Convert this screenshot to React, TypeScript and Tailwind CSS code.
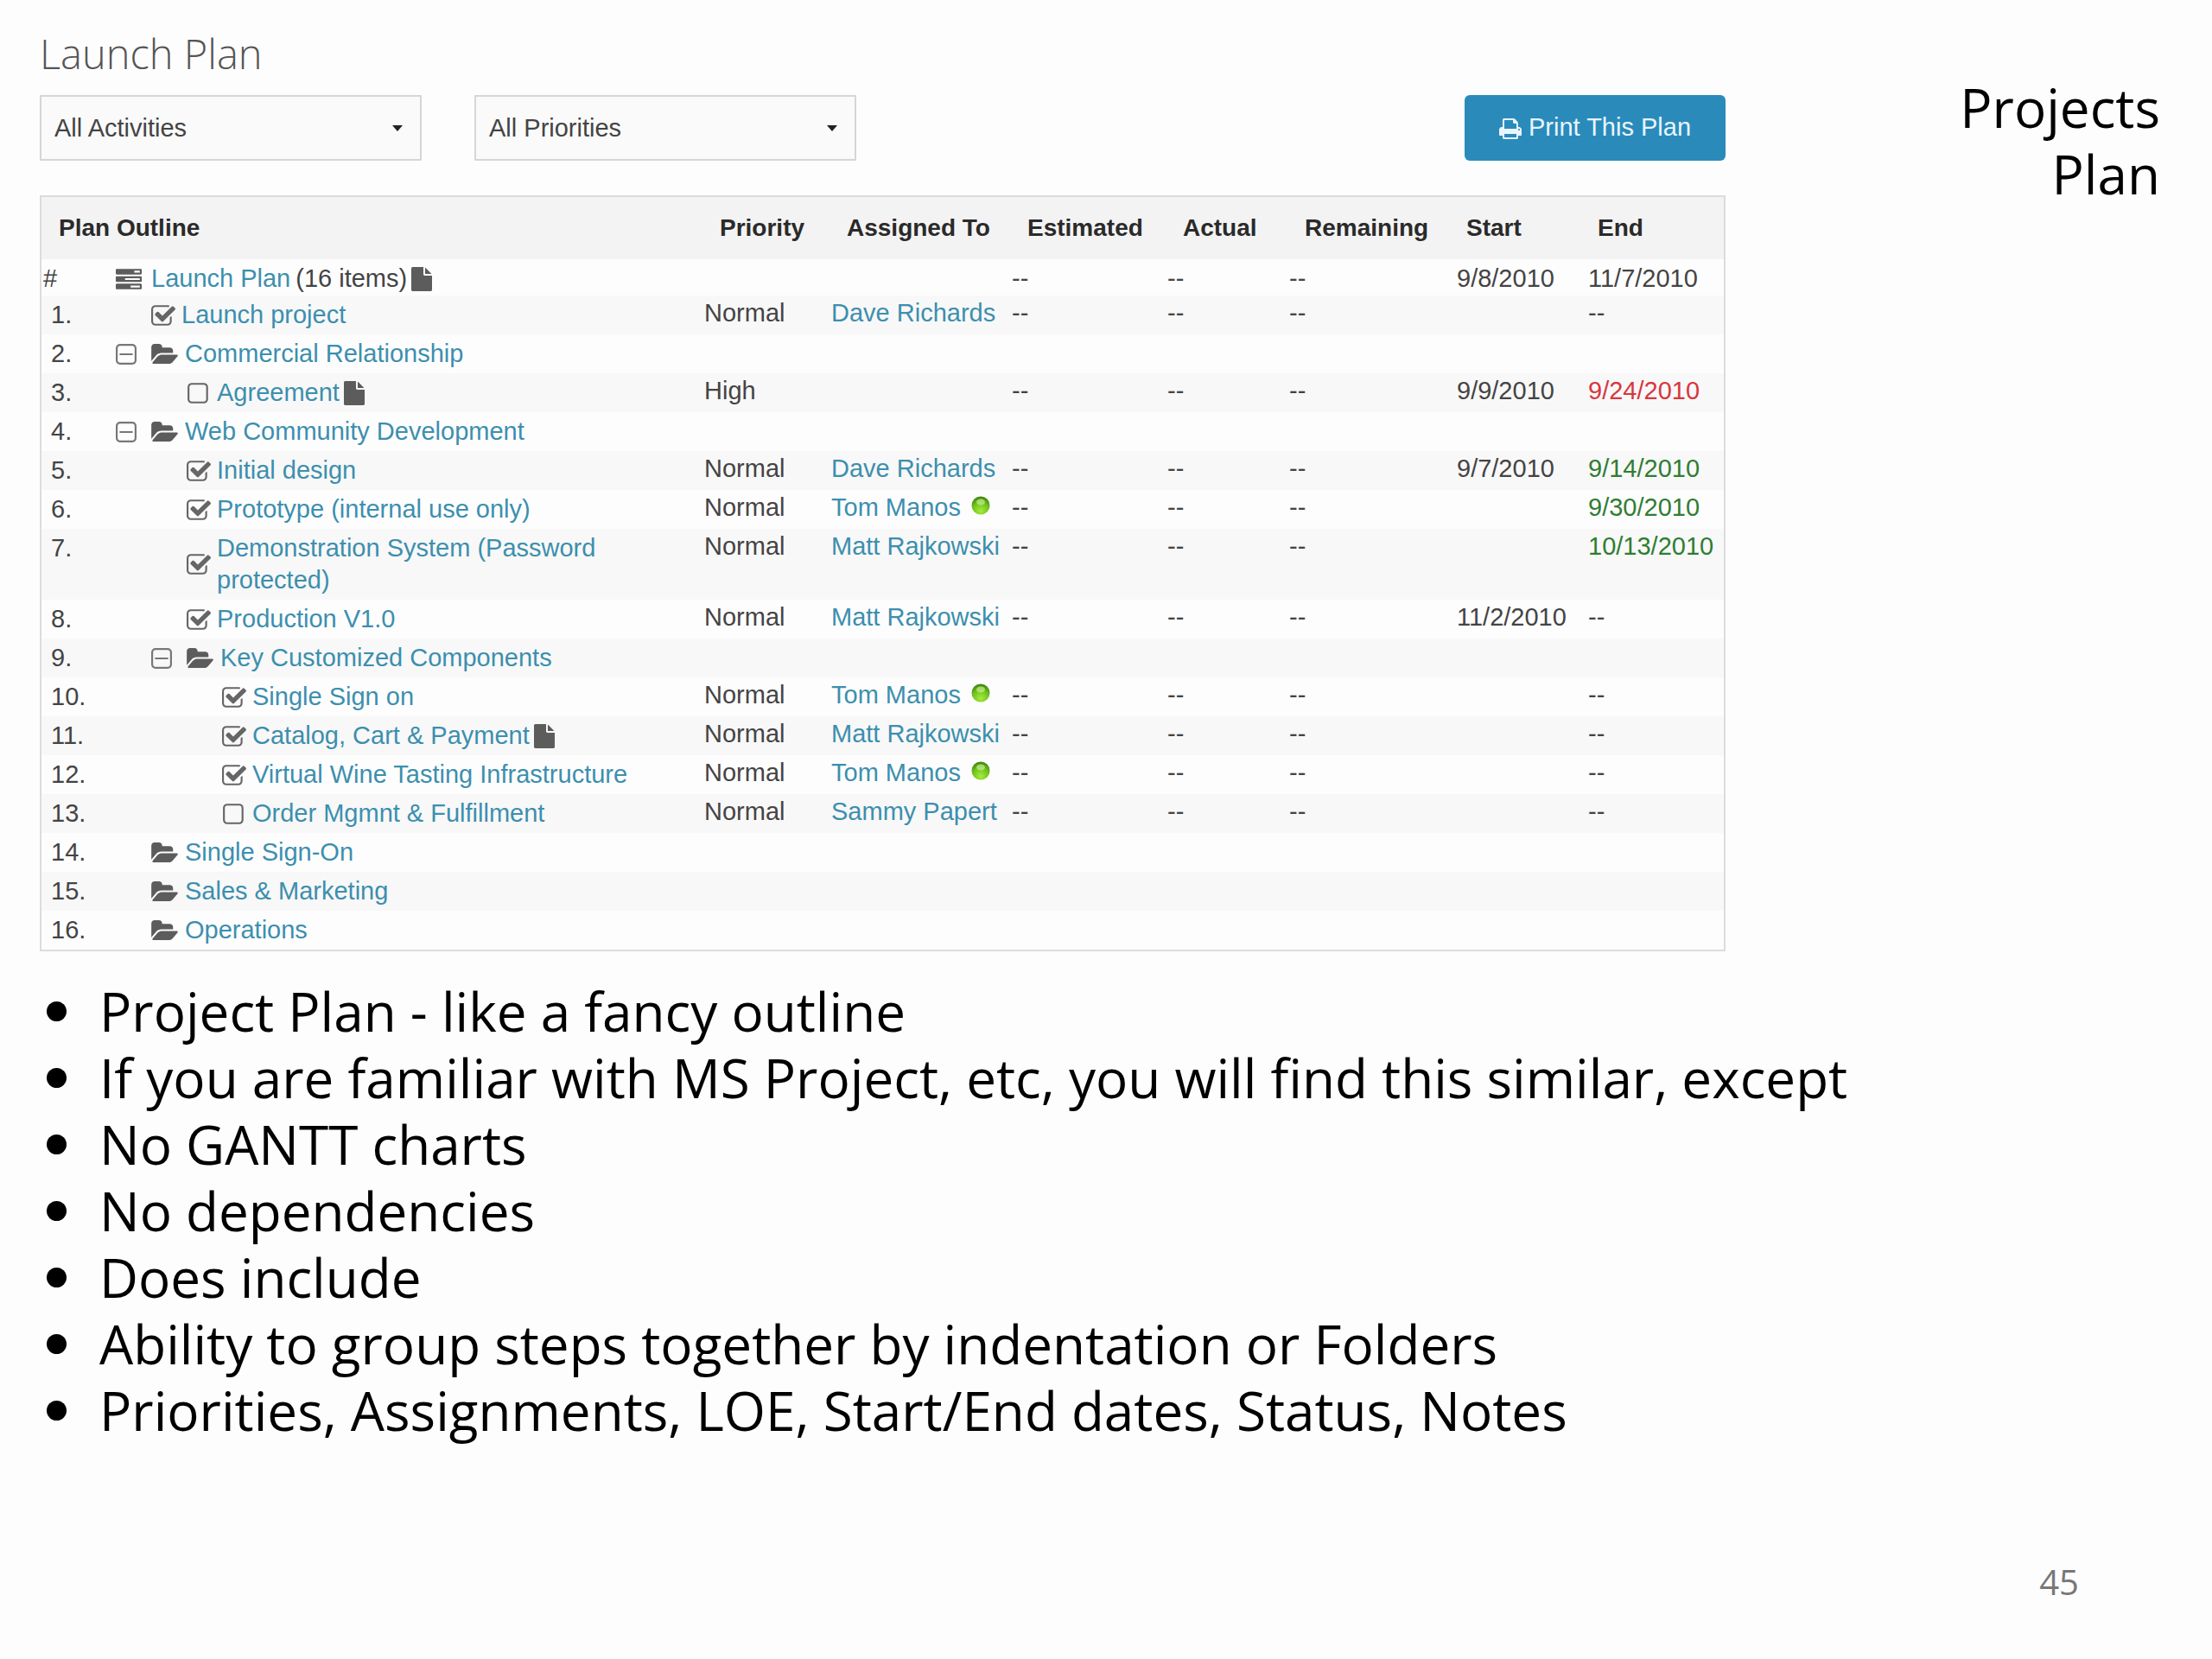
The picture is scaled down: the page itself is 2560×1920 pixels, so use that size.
import { useState } from 'react'

type Kind = 'plan' | 'task' | 'folder'

interface Row {
  num: string
  kind: Kind
  title: string
  level: number
  open?: boolean
  done?: boolean
  note?: boolean
  priority?: string
  person?: string
  online?: boolean
  start?: string
  end?: string
  endColor?: string
}

const rows: Row[] = [
  { num: '#', kind: 'plan', title: 'Launch Plan', level: 0, note: true, start: '9/8/2010', end: '11/7/2010' },
  { num: '1.', kind: 'task', title: 'Launch project', level: 1, done: true, priority: 'Normal', person: 'Dave Richards', end: '--' },
  { num: '2.', kind: 'folder', title: 'Commercial Relationship', level: 0, open: true },
  { num: '3.', kind: 'task', title: 'Agreement', level: 2, note: true, priority: 'High', start: '9/9/2010', end: '9/24/2010', endColor: 'text-[#d9363e]' },
  { num: '4.', kind: 'folder', title: 'Web Community Development', level: 0, open: true },
  { num: '5.', kind: 'task', title: 'Initial design', level: 2, done: true, priority: 'Normal', person: 'Dave Richards', start: '9/7/2010', end: '9/14/2010', endColor: 'text-[#2f7d32]' },
  { num: '6.', kind: 'task', title: 'Prototype (internal use only)', level: 2, done: true, priority: 'Normal', person: 'Tom Manos', online: true, end: '9/30/2010', endColor: 'text-[#2f7d32]' },
  { num: '7.', kind: 'task', title: 'Demonstration System (Password protected)', level: 2, done: true, priority: 'Normal', person: 'Matt Rajkowski', end: '10/13/2010', endColor: 'text-[#2f7d32]' },
  { num: '8.', kind: 'task', title: 'Production V1.0', level: 2, done: true, priority: 'Normal', person: 'Matt Rajkowski', start: '11/2/2010', end: '--' },
  { num: '9.', kind: 'folder', title: 'Key Customized Components', level: 1, open: true },
  { num: '10.', kind: 'task', title: 'Single Sign on', level: 3, done: true, priority: 'Normal', person: 'Tom Manos', online: true, end: '--' },
  { num: '11.', kind: 'task', title: 'Catalog, Cart & Payment', level: 3, done: true, note: true, priority: 'Normal', person: 'Matt Rajkowski', end: '--' },
  { num: '12.', kind: 'task', title: 'Virtual Wine Tasting Infrastructure', level: 3, done: true, priority: 'Normal', person: 'Tom Manos', online: true, end: '--' },
  { num: '13.', kind: 'task', title: 'Order Mgmnt & Fulfillment', level: 3, priority: 'Normal', person: 'Sammy Papert', end: '--' },
  { num: '14.', kind: 'folder', title: 'Single Sign-On', level: 1 },
  { num: '15.', kind: 'folder', title: 'Sales & Marketing', level: 1 },
  { num: '16.', kind: 'folder', title: 'Operations', level: 1 },
]

const points = [
  'Project Plan - like a fancy outline',
  'If you are familiar with MS Project, etc, you will find this similar, except',
  'No GANTT charts',
  'No dependencies',
  'Does include',
  'Ability to group steps together by indentation or Folders',
  'Priorities, Assignments, LOE, Start/End dates, Status, Notes',
]

const indents = ['pl-1', 'pl-[45px]', 'pl-[86px]', 'pl-[127px]']

const icons = {
  square:
    'M1312 256h-832q-66 0-113 47t-47 113v832q0 66 47 113t113 47h832q66 0 113-47t47-113v-832q0-66-47-113t-113-47zm288 160v832q0 119-84.5 203.5t-203.5 84.5h-832q-119 0-203.5-84.5t-84.5-203.5v-832q0-119 84.5-203.5t203.5-84.5h832q119 0 203.5 84.5t84.5 203.5z',
  minus:
    'M1344 800v64q0 14-9 23t-23 9h-832q-14 0-23-9t-9-23v-64q0-14 9-23t23-9h832q14 0 23 9t9 23zm128 448v-832q0-66-47-113t-113-47h-832q-66 0-113 47t-47 113v832q0 66 47 113t113 47h832q66 0 113-47t47-113zm128-832v832q0 119-84.5 203.5t-203.5 84.5h-832q-119 0-203.5-84.5t-84.5-203.5v-832q0-119 84.5-203.5t203.5-84.5h832q119 0 203.5 84.5t84.5 203.5z',
  check:
    'M1472 930v318q0 119-84.5 203.5t-203.5 84.5h-832q-119 0-203.5-84.5t-84.5-203.5v-832q0-119 84.5-203.5t203.5-84.5h832q63 0 117 25 15 7 18 23 3 17-9 29l-49 49q-10 10-23 10-3 0-9-2-23-6-45-6h-832q-66 0-113 47t-47 113v832q0 66 47 113t113 47h832q66 0 113-47t47-113v-254q0-13 9-22l64-64q10-10 23-10 6 0 12 3 20 8 20 29zm231-489l-814 814q-24 24-57 24t-57-24l-430-430q-24-24-24-57t24-57l110-110q24-24 57-24t57 24l263 263 647-647q24-24 57-24t57 24l110 110q24 24 24 57t-24 57z',
  folder:
    'M1879 952q0 31-31 66l-336 396q-43 51-120.5 86.5t-143.5 35.5h-1088q-34 0-60.5-13t-26.5-43q0-31 31-66l336-396q43-51 120.5-86.5t143.5-35.5h1088q34 0 60.5 13t26.5 43zm-343-344v160h-832q-94 0-197 47.5t-164 119.5l-337 396-5 6q0-4-.5-12.5t-.5-12.5v-960q0-92 66-158t158-66h320q92 0 158 66t66 158v32h544q92 0 158 66t66 158z',
  file:
    'M1152 512v-472q22 14 36 28l408 408q14 14 28 36h-472zm-128 32q0 40 28 68t68 28h544v1056q0 40-28 68t-68 28h-1344q-40 0-68-28t-28-68v-1600q0-40 28-68t68-28h800v544z',
  tasks:
    'M1024 1408h640v-128h-640v128zm-384-512h1024v-128h-1024v128zm640-512h384v-128h-384v128zm512 832v256q0 26-19 45t-45 19h-1664q-26 0-45-19t-19-45v-256q0-26 19-45t45-19h1664q26 0 45 19t19 45zm0-512v256q0 26-19 45t-45 19h-1664q-26 0-45-19t-19-45v-256q0-26 19-45t45-19h1664q26 0 45 19t19 45zm0-512v256q0 26-19 45t-45 19h-1664q-26 0-45-19t-19-45v-256q0-26 19-45t45-19h1664q26 0 45 19t19 45z',
  print:
    'M448 1536h896v-256h-896v256zm0-640h896v-384h-160q-40 0-68-28t-28-68v-160h-640v640zm1152 64q0-26-19-45t-45-19-45 19-19 45 19 45 45 19 45-19 19-45zm128 0v416q0 13-9.5 22.5t-22.5 9.5h-224v160q0 40-28 68t-68 28h-960q-40 0-68-28t-28-68v-160h-224q-13 0-22.5-9.5t-9.5-22.5v-416q0-79 56.5-135.5t135.5-56.5h64v-544q0-40 28-68t68-28h672q40 0 88 20t76 48l152 152q28 28 48 76t20 88v256h64q79 0 135.5 56.5t56.5 135.5z',
}

function Icon({ name, box, className }: { name: keyof typeof icons; box: string; className: string }) {
  return (
    <svg viewBox={box} className={`shrink-0 fill-current ${className}`} aria-hidden="true">
      <path d={icons[name]} />
    </svg>
  )
}

function Filter({ label, option }: { label: string; option: string }) {
  return (
    <div className="grid w-[442px] items-center">
      <select
        aria-label={label}
        className="col-start-1 row-start-1 h-[76px] w-full appearance-none border-2 border-[#d6d6d6] bg-[#fafafa] px-[15px] pt-[2px] text-[29px] text-[#444]"
      >
        <option>{option}</option>
      </select>
      <svg viewBox="0 0 12 7" className="pointer-events-none col-start-1 row-start-1 mr-[22px] h-[7px] w-3 justify-self-end fill-[#222]" aria-hidden="true">
        <path d="M0 0h12L6 7z" />
      </svg>
    </div>
  )
}

function OnlineDot() {
  return (
    <svg viewBox="0 0 22 22" className="mt-[5px] ml-3 size-[22px]" role="img" aria-label="Online">
      <defs>
        <radialGradient id="online" cx="50%" cy="80%" r="75%">
          <stop offset="0" stopColor="#a4ec3c" />
          <stop offset="0.6" stopColor="#72c21e" />
          <stop offset="1" stopColor="#418a10" />
        </radialGradient>
      </defs>
      <circle cx="11" cy="11" r="10.5" fill="url(#online)" />
      <ellipse cx="11" cy="7" rx="5" ry="3.5" fill="#d3f5a4" opacity="0.6" />
    </svg>
  )
}

function Outline({ row }: { row: Row }) {
  const [done, setDone] = useState(!!row.done)
  const id = `row-${parseInt(row.num) || 0}`

  return (
    <div className={`flex items-center ${indents[row.level]}`}>
      {row.kind === 'plan' && <Icon name="tasks" box="0 128 1792 1408" className="mr-[11px] h-6 w-[30px] text-[#5c5c5c]" />}
      {row.kind === 'task' && (
        <span className="mr-[7px] grid h-6 w-7 shrink-0">
          <input
            id={id}
            type="checkbox"
            checked={done}
            onChange={() => setDone(!done)}
            className="col-start-1 row-start-1 appearance-none"
          />
          <Icon
            name={done ? 'check' : 'square'}
            box={done ? '64 128 1664 1408' : '128 128 1664 1408'}
            className="pointer-events-none col-start-1 row-start-1 h-6 w-7 text-[#666]"
          />
        </span>
      )}
      {row.kind === 'folder' && (
        <>
          {row.open && (
            <button aria-label={`Collapse ${row.title}`} className="mr-[17px] flex">
              <Icon name="minus" box="192 128 1408 1408" className="size-6 text-[#777]" />
            </button>
          )}
          <Icon name="folder" box="0 128 1879 1408" className="mr-2 h-[23px] w-[31px] text-[#5c5c5c]" />
        </>
      )}
      {row.kind === 'task' ? (
        <label htmlFor={id}>
          <a href="#" className="text-[#3c8fae]">{row.title}</a>
        </label>
      ) : (
        <a href="#" className="text-[#3c8fae]">{row.title}</a>
      )}
      {row.kind === 'plan' && <span className="ml-[6px]">(16 items)</span>}
      {row.note && <Icon name="file" box="128 0 1536 1792" className="ml-[5px] h-7 w-6 text-[#5c5c5c]" />}
    </div>
  )
}

function PlanTable() {
  const head = 'pb-[2px] pl-[18px] text-left font-bold'
  const dateHead = 'pb-[2px] pl-[11px] text-left font-bold'
  return (
    <table className="mt-10 w-full table-fixed border-separate border-spacing-0 border-2 border-[#dcdcdc] text-[29px] leading-[37px] text-[#444]">
      <colgroup>
        <col className="w-[82px]" />
        <col />
        <col className="w-[147px]" />
        <col className="w-[209px]" />
        <col className="w-[180px]" />
        <col className="w-[141px]" />
        <col className="w-[194px]" />
        <col className="w-[152px]" />
        <col className="w-[157px]" />
      </colgroup>
      <thead className="bg-[#f3f3f3] text-[28px] text-[#2a2a2a]">
        <tr className="h-[72px]">
          <th colSpan={2} className="pb-[2px] pl-5 text-left font-bold">Plan Outline</th>
          <th className={head}>Priority</th>
          <th className={head}>Assigned To</th>
          <th className={head}>Estimated</th>
          <th className={head}>Actual</th>
          <th className={head}>Remaining</th>
          <th className={dateHead}>Start</th>
          <th className={dateHead}>End</th>
        </tr>
      </thead>
      <tbody>
        {rows.map((row) => {
          const effort = row.kind === 'folder' ? '' : '--'
          const cell = row.kind === 'plan' ? 'pt-1 pb-px' : 'pt-[2px] pb-[6px]'
          const outlineCell = row.kind === 'plan' ? 'pt-1 pb-px' : 'py-1'
          return (
            <tr key={row.num} className="align-top whitespace-nowrap even:bg-[#f8f8f8]">
              <td className={`${outlineCell} ${row.kind === 'plan' ? 'pl-[2px]' : 'pl-[11px]'}`}>{row.num}</td>
              <td className={`whitespace-normal ${outlineCell}`}>
                <Outline row={row} />
              </td>
              <td className={cell}>{row.priority}</td>
              <td className={cell}>
                {row.person && (
                  <span className="flex items-start">
                    <a href="#" className="text-[#3c8fae]">{row.person}</a>
                    {row.online && <OnlineDot />}
                  </span>
                )}
              </td>
              <td className={cell}>{effort}</td>
              <td className={cell}>{effort}</td>
              <td className={cell}>{effort}</td>
              <td className={cell}>{row.start}</td>
              <td className={`${cell} ${row.endColor ?? ''}`}>{row.end}</td>
            </tr>
          )
        })}
      </tbody>
    </table>
  )
}

export default function App() {
  return (
    <div className="flex min-h-screen flex-col bg-[#fefdfe] pr-[60px] pl-[46px]">
      <div className="flex items-start">
        <section className="min-w-0 flex-1 pt-[30px] font-['Liberation_Sans',Arial,sans-serif]">
          <h2 className="font-['Open_Sans',sans-serif] text-[47px] leading-[64px] font-light text-[#555]">Launch Plan</h2>
          <div className="mt-4 flex items-center">
            <Filter label="Activities" option="All Activities" />
            <div className="ml-[61px]">
              <Filter label="Priorities" option="All Priorities" />
            </div>
            <button className="ml-auto flex h-[76px] w-[302px] items-center justify-center gap-2 rounded-md bg-[#2a8bbb] text-[29px] text-[#e8f5fb]">
              <Icon name="print" box="64 0 1664 1664" className="size-[26px]" />
              Print This Plan
            </button>
          </div>
          <PlanTable />
        </section>
        <h1 className="w-[503px] pt-[86px] pl-[200px] text-right font-['Open_Sans',sans-serif] text-[62px] leading-[77px] text-black">
          Projects Plan
        </h1>
      </div>

      <ul className="mt-[31px] font-['Open_Sans',sans-serif] text-[62px] leading-[77px] text-black">
        {points.map((point) => (
          <li key={point} className="flex items-center">
            <span className="mr-[38px] ml-2 size-[23px] rounded-full bg-black"></span>
            {point}
          </li>
        ))}
      </ul>

      <footer className="mt-auto pr-[94px] pb-16 text-right font-['Open_Sans',sans-serif] text-[40px] leading-[50px] text-[#777]">
        45
      </footer>
    </div>
  )
}
